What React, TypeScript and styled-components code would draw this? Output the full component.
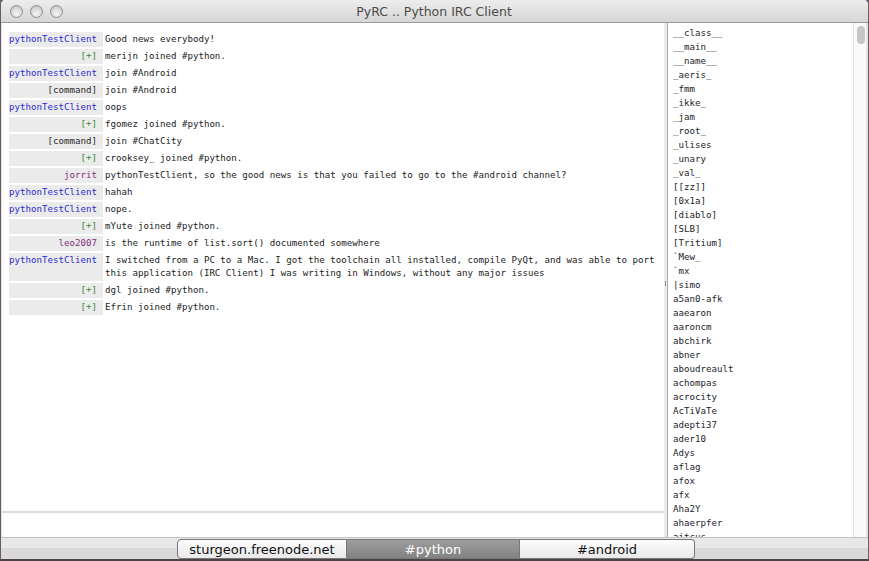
import styled, { createGlobalStyle } from 'styled-components';

type Kind = 'self' | 'join' | 'command' | 'other';

interface Message {
  nick: string;
  kind: Kind;
  text: string;
}

const messages: Message[] = [
  { nick: 'pythonTestClient', kind: 'self', text: 'Good news everybody!' },
  { nick: '[+]', kind: 'join', text: 'merijn joined #python.' },
  { nick: 'pythonTestClient', kind: 'self', text: 'join #Android' },
  { nick: '[command]', kind: 'command', text: 'join #Android' },
  { nick: 'pythonTestClient', kind: 'self', text: 'oops' },
  { nick: '[+]', kind: 'join', text: 'fgomez joined #python.' },
  { nick: '[command]', kind: 'command', text: 'join #ChatCity' },
  { nick: '[+]', kind: 'join', text: 'crooksey_ joined #python.' },
  {
    nick: 'jorrit',
    kind: 'other',
    text: 'pythonTestClient, so the good news is that you failed to go to the #android channel?',
  },
  { nick: 'pythonTestClient', kind: 'self', text: 'hahah' },
  { nick: 'pythonTestClient', kind: 'self', text: 'nope.' },
  { nick: '[+]', kind: 'join', text: 'mYute joined #python.' },
  { nick: 'leo2007', kind: 'other', text: 'is the runtime of list.sort() documented somewhere' },
  {
    nick: 'pythonTestClient',
    kind: 'self',
    text: 'I switched from a PC to a Mac. I got the toolchain all installed, compile PyQt, and was able to port this application (IRC Client) I was writing in Windows, without any major issues',
  },
  { nick: '[+]', kind: 'join', text: 'dgl joined #python.' },
  { nick: '[+]', kind: 'join', text: 'Efrin joined #python.' },
];

const users = [
  '__class__', '__main__', '__name__', '_aeris_', '_fmm', '_ikke_', '_jam', '_root_',
  '_ulises', '_unary', '_val_', '[[zz]]', '[0x1a]', '[diablo]', '[SLB]', '[Tritium]',
  '`Mew_', '`mx', '|simo', 'a5an0-afk', 'aaearon', 'aaroncm', 'abchirk', 'abner',
  'aboudreault', 'achompas', 'acrocity', 'AcTiVaTe', 'adepti37', 'ader10', 'Adys',
  'aflag', 'afox', 'afx', 'Aha2Y', 'ahaerpfer', 'aitcus',
];

const tabs = [
  { label: 'sturgeon.freenode.net', width: 170 },
  { label: '#python', width: 173 },
  { label: '#android', width: 175 },
];

const nickColors: Record<Kind, string> = {
  self: '#2c2cd2',
  join: '#3b8a3b',
  command: '#2a2a2a',
  other: '#84307e',
};

const GlobalStyle = createGlobalStyle`
  html, body {
    margin: 0;
    padding: 0;
  }
  body {
    background: #6e5b67;
    width: 869px;
    height: 561px;
    overflow: hidden;
  }
`;

const Window = styled.div`
  width: 869px;
  height: 561px;
  box-sizing: border-box;
  display: flex;
  flex-direction: column;
  border: 1px solid #6a5c60;
  border-top: none;
  border-bottom: 2px solid #4d4346;
  border-radius: 5px 5px 0 0;
  overflow: hidden;
  background: #e4e4e4;
`;

const TitleBar = styled.div`
  height: 22px;
  flex: none;
  display: flex;
  align-items: center;
  background: linear-gradient(#ededed, #d6d6d6);
  border-bottom: 1px solid #9b9b9b;
`;

const Lights = styled.div`
  display: flex;
  gap: 7px;
  padding-left: 9px;
`;

const Light = styled.span`
  width: 13px;
  height: 13px;
  border-radius: 50%;
  box-sizing: border-box;
  border: 1px solid #8e8e8e;
  background: radial-gradient(circle at 50% 70%, #f6f6f6 0%, #d8d8d8 55%, #b9b9b9 100%);
`;

const Title = styled.div`
  flex: 1;
  text-align: center;
  margin-left: -63px;
  font-family: 'DejaVu Sans', sans-serif;
  font-size: 12.5px;
  color: #4b4b4b;
`;

const Main = styled.div`
  flex: 1;
  min-height: 0;
  display: flex;
  padding-left: 1px;
  padding-right: 2px;
`;

const ChatColumn = styled.div`
  width: 662px;
  flex: none;
  display: flex;
  flex-direction: column;
`;

const MessageList = styled.div`
  flex: 1;
  min-height: 0;
  background: #fff;
  padding: 9px 4px 0 7px;
  display: flex;
  flex-direction: column;
  gap: 2px;
  font-family: 'DejaVu Sans Mono', monospace;
  font-size: 9.15px;
  line-height: 13px;
  color: #1c1c1c;
`;

const Row = styled.div`
  display: flex;
  gap: 2px;
`;

const Nick = styled.div<{ $kind: Kind }>`
  width: 94px;
  flex: none;
  box-sizing: border-box;
  padding: 1px 6px 1px 0;
  text-align: right;
  background: #ebebeb;
  color: ${(p) => nickColors[p.$kind]};
  white-space: nowrap;
`;

const Text = styled.div`
  flex: 1;
  padding: 1px 0;
`;

const InputLine = styled.div`
  height: 24px;
  flex: none;
  background: #fff;
  border-top: 2px solid #dcdcdc;
`;

const Splitter = styled.div`
  width: 3px;
  flex: none;
  display: flex;
  align-items: center;
  justify-content: center;
  background: #ececec;
`;

const Grip = styled.span`
  width: 1px;
  height: 5px;
  margin-top: 6px;
  background: #8f8f8f;
`;

const UserPanel = styled.div`
  flex: 1;
  display: flex;
  border-left: 1px solid #a9a9a9;
  background: #fff;
  overflow: hidden;
`;

const UserList = styled.div`
  flex: 1;
  padding: 3px 0 0 5px;
  font-family: 'DejaVu Sans Mono', monospace;
  font-size: 9.15px;
  line-height: 14px;
  color: #1d1d2b;
  overflow: hidden;
`;

const User = styled.div`
  white-space: nowrap;
`;

const ScrollTrack = styled.div`
  width: 13px;
  flex: none;
  border-left: 1px solid #e2e2e2;
  background: #fafafa;
  padding: 3px 0 0 3px;
  box-sizing: border-box;
`;

const ScrollThumb = styled.div`
  width: 8px;
  height: 18px;
  border-radius: 4px;
  background: #c6c6c6;
`;

const TabBar = styled.div`
  height: 22px;
  flex: none;
  box-sizing: border-box;
  display: flex;
  align-items: flex-end;
  padding-left: 176px;
  border-top: 1px solid #c2c2c2;
  background: linear-gradient(#e8e8e8 0 50%, #d9d9d9 50% 100%);
`;

const Tab = styled.div<{ $selected: boolean; $first: boolean; $last: boolean }>`
  height: 20px;
  box-sizing: border-box;
  display: flex;
  align-items: center;
  justify-content: center;
  font-family: 'DejaVu Sans', sans-serif;
  font-size: 13px;
  border: 1px solid #777;
  border-left: ${(p) => (p.$first ? '1px solid #777' : 'none')};
  border-radius: ${(p) => (p.$first ? '4px 0 0 4px' : p.$last ? '0 4px 4px 0' : '0')};
  color: ${(p) => (p.$selected ? '#fff' : '#111')};
  background: ${(p) =>
    p.$selected
      ? 'linear-gradient(#9d9d9d, #828282)'
      : 'linear-gradient(#fdfdfd, #e9e9e9)'};
`;

const App = () => {
  return (
    <>
      <GlobalStyle />
      <Window>
        <TitleBar>
          <Lights>
            <Light />
            <Light />
            <Light />
          </Lights>
          <Title>PyRC .. Python IRC Client</Title>
        </TitleBar>
        <Main>
          <ChatColumn>
            <MessageList>
              {messages.map((m, i) => (
                <Row key={i}>
                  <Nick $kind={m.kind}>{m.nick}</Nick>
                  <Text>{m.text}</Text>
                </Row>
              ))}
            </MessageList>
            <InputLine />
          </ChatColumn>
          <Splitter>
            <Grip />
          </Splitter>
          <UserPanel>
            <UserList>
              {users.map((u) => (
                <User key={u}>{u}</User>
              ))}
            </UserList>
            <ScrollTrack>
              <ScrollThumb />
            </ScrollTrack>
          </UserPanel>
        </Main>
        <TabBar>
          {tabs.map((t, i) => (
            <Tab
              key={t.label}
              style={{ width: t.width }}
              $selected={i === 1}
              $first={i === 0}
              $last={i === tabs.length - 1}
            >
              {t.label}
            </Tab>
          ))}
        </TabBar>
      </Window>
    </>
  );
};

export default App;
